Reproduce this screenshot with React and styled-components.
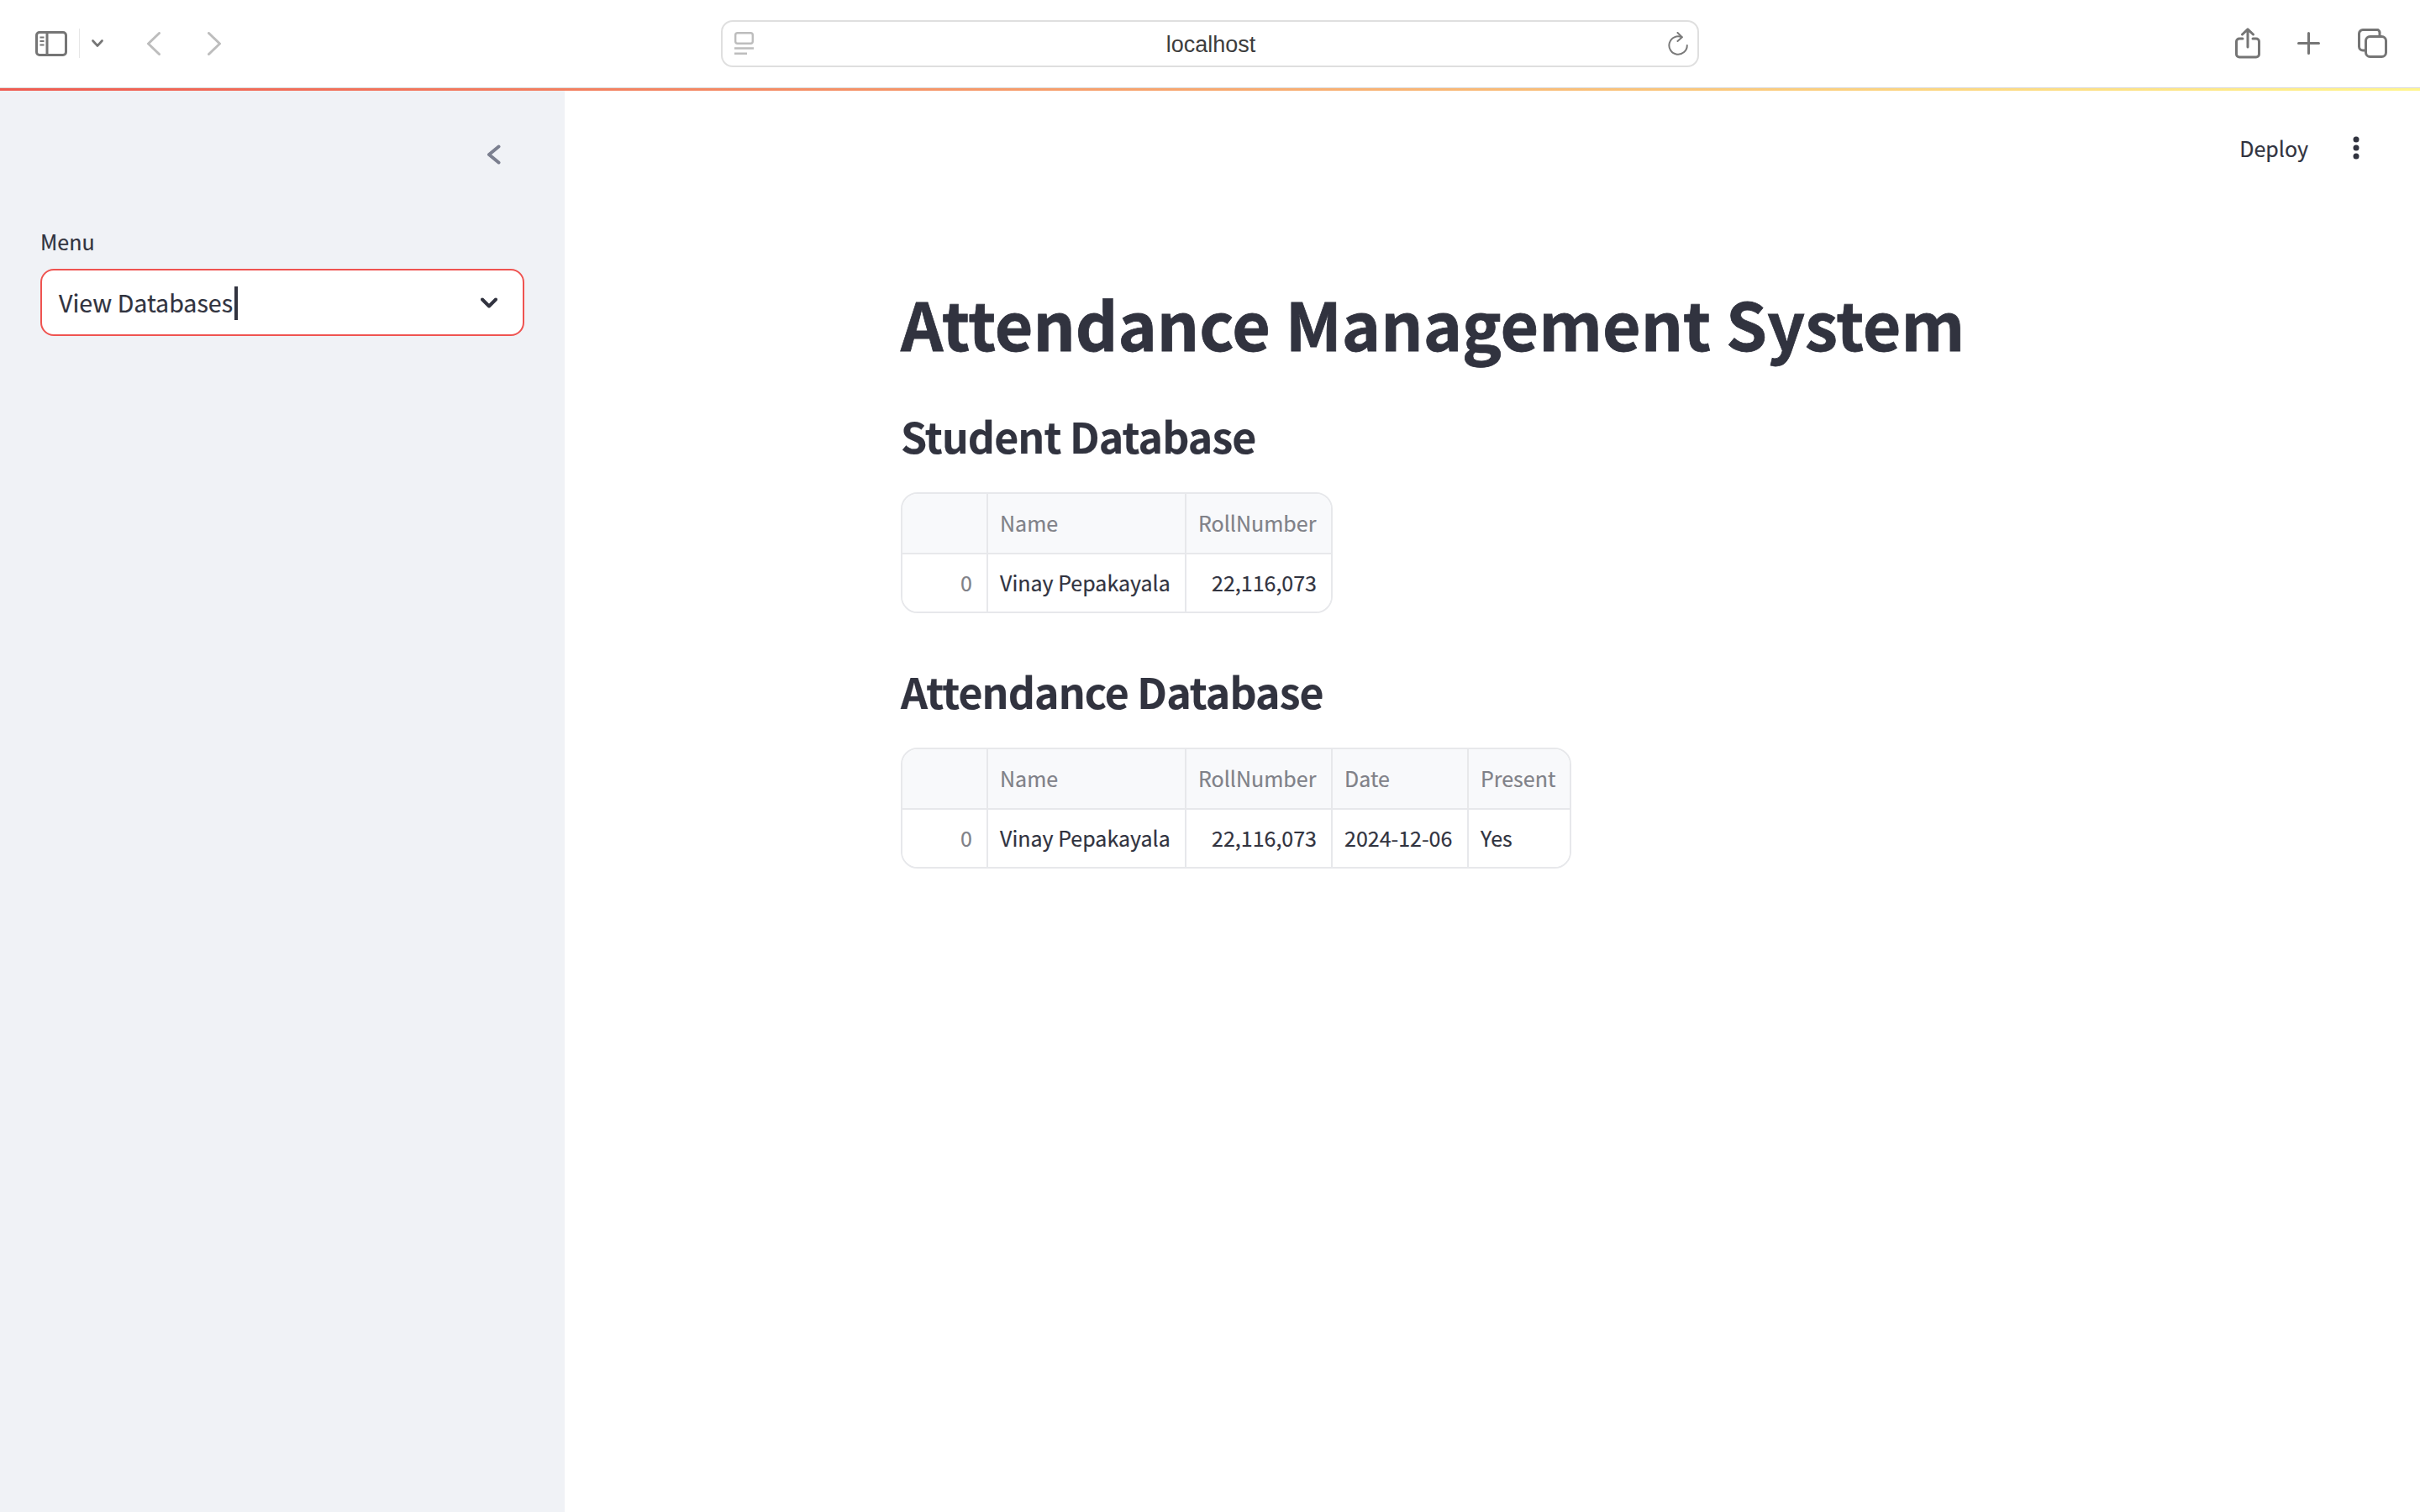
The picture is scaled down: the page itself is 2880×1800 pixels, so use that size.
import React from "react";
import styled, { createGlobalStyle } from "styled-components";

const SANS = `"Noto Sans CJK SC", "Noto Sans", sans-serif`;
const INK = "#31333f";
const MUTED = "#808188";
const RULE = "#e7e8eb";

const Global = createGlobalStyle`
  html, body { margin: 0; padding: 0; background: #fff; }
  body { font-family: ${SANS}; color: ${INK}; -webkit-text-stroke: 0.2px currentColor; }
  * { box-sizing: border-box; }
`;

const Page = styled.div`
  width: 2880px;
  height: 1800px;
  display: flex;
  flex-direction: column;
  overflow: hidden;
`;

const Toolbar = styled.header`
  height: 105px;
  flex: none;
  display: flex;
  align-items: center;
  padding-bottom: 1px;
  border-bottom: 1px solid #d9d9d9;
  background: #fff;
`;

const ToolLeft = styled.div`
  width: 858px;
  flex: none;
  display: flex;
  align-items: center;
  padding-left: 42px;
`;

const ToolRight = styled.div`
  flex: 1;
  display: flex;
  align-items: center;
  justify-content: flex-end;
  padding-right: 39px;
`;

const Divider = styled.span`
  width: 1px;
  height: 35px;
  background: #e6e6e6;
  margin: 0 14px;
`;

const ToolIcon = styled.svg`
  display: block;
  flex: none;
  margin-left: ${(p) => p.$left || 0}px;
`;

const AddressBar = styled.div`
  width: 1164px;
  height: 56px;
  flex: none;
  display: flex;
  align-items: center;
  justify-content: space-between;
  padding: 0 11px 0 14px;
  border: 2px solid #dfdfdf;
  border-radius: 14px;
`;

const Host = styled.span`
  font-family: "Liberation Sans", Arial, sans-serif;
  font-size: 27px;
  line-height: 32px;
  padding: 3px 0 0 0;
  color: #3d3d3d;
  -webkit-text-stroke: 0;
`;

const Progress = styled.div`
  height: 3px;
  flex: none;
  background: linear-gradient(90deg, #ef5a50, #fff58e);
`;

const Body = styled.div`
  flex: 1;
  display: flex;
  min-height: 0;
`;

const Sidebar = styled.aside`
  width: 672px;
  flex: none;
  background: #f0f2f6;
  padding: 64px 48px 0;
`;

const CollapseRow = styled.div`
  display: flex;
  justify-content: flex-end;
  padding-right: 28px;
`;

const FieldLabel = styled.label`
  display: block;
  margin-top: 70px;
  font-size: 25px;
  line-height: 43px;
  color: ${INK};
`;

const Select = styled.div`
  margin-top: 11px;
  height: 80px;
  display: flex;
  align-items: center;
  justify-content: space-between;
  padding: 0 30px 0 20px;
  background: #fff;
  border: 2px solid #ef5350;
  border-radius: 16px;
  font-size: 28.6px;
  color: ${INK};
`;

const SelectValue = styled.span`
  display: flex;
  align-items: center;
  line-height: 40px;
  margin-top: -1px;
`;

const Caret = styled.i`
  display: block;
  width: 4px;
  height: 40px;
  margin: 2px 0 0 2px;
  background: ${INK};
`;

const Main = styled.main`
  flex: 1;
  min-width: 0;
`;

const AppHeader = styled.div`
  height: 136px;
  display: flex;
  align-items: center;
  justify-content: flex-end;
  gap: 53px;
  padding: 0 72px 0 0;
`;

const DeployLabel = styled.span`
  font-size: 25px;
  line-height: 40px;
  margin-top: -1px;
  color: ${INK};
`;

const Content = styled.div`
  padding: 0 0 0 400px;
`;

const Title = styled.h1`
  margin: 87px 0 0;
  font-size: 78.6px;
  line-height: 106px;
  font-weight: 700;
  -webkit-text-stroke: 0.8px currentColor;
  color: ${INK};
`;

const Subhead = styled.h3`
  margin: ${(p) => p.$top}px 0 0;
  font-size: 50px;
  line-height: 72px;
  font-weight: 700;
  letter-spacing: -0.9px;
  color: ${INK};
`;

const Grid = styled.div`
  display: inline-grid;
  grid-template-columns: ${(p) => p.$columns};
  grid-template-rows: 72px 68px;
  margin-top: 32px;
  border: 2px solid ${RULE};
  border-radius: 20px;
  overflow: hidden;
  vertical-align: top;
  font-size: 25px;
`;

const Cell = styled.div`
  display: flex;
  align-items: center;
  justify-content: ${(p) => (p.$end ? "flex-end" : "flex-start")};
  padding: 0 ${(p) => (p.$end ? 17 : 14)}px 2px 14px;
  white-space: nowrap;
  color: ${(p) => (p.$muted ? MUTED : INK)};
  background: ${(p) => (p.$head ? "#f8f9fb" : "#fff")};
  border-right: ${(p) => (p.$last ? "none" : `2px solid ${RULE}`)};
  border-bottom: ${(p) => (p.$head ? `2px solid ${RULE}` : "none")};
`;

const Block = styled.div``;

function DataTable({ columns, head, row }) {
  return (
    <Block>
      <Grid $columns={columns}>
        <Cell $head />
        {head.map((h, i) => (
          <Cell key={h} $head $muted $last={i === head.length - 1}>{h}</Cell>
        ))}
        <Cell $end $muted>0</Cell>
        {row.map((c, i) => (
          <Cell key={c.text} $end={c.end} $last={i === row.length - 1}>{c.text}</Cell>
        ))}
      </Grid>
    </Block>
  );
}

const students = {
  columns: "102px 236px 172px",
  head: ["Name", "RollNumber"],
  row: [{ text: "Vinay Pepakayala" }, { text: "22,116,073", end: true }],
};

const attendance = {
  columns: "102px 236px 174px 162px 120px",
  head: ["Name", "RollNumber", "Date", "Present"],
  row: [
    { text: "Vinay Pepakayala" },
    { text: "22,116,073", end: true },
    { text: "2024-12-06" },
    { text: "Yes" },
  ],
};

export default function App() {
  return (
    <Page>
      <Global />
      <Toolbar>
        <ToolLeft>
          <ToolIcon width="38" height="30" viewBox="0 0 38 30" fill="none" stroke="#757575" strokeWidth="3">
            <rect x="1.5" y="1.5" width="35" height="27" rx="3.5" />
            <path d="M14 2v26" />
            <path d="M5.5 7.5h5M5.5 12h5M5.5 16.5h5" strokeWidth="2" />
          </ToolIcon>
          <Divider />
          <ToolIcon width="14" height="9" viewBox="0 0 14 9" fill="none" stroke="#757575" strokeWidth="2.6" strokeLinecap="round" strokeLinejoin="round">
            <path d="M1.5 1.5 7 7.5l5.5-6" />
          </ToolIcon>
          <ToolIcon $left={52} width="16" height="28" viewBox="0 0 16 28" fill="none" stroke="#bdbdbd" strokeWidth="3" strokeLinecap="round" strokeLinejoin="round">
            <path d="M14.5 1.5 1.5 14l13 12.500" />
          </ToolIcon>
          <ToolIcon $left={56} width="16" height="28" viewBox="0 0 16 28" fill="none" stroke="#bdbdbd" strokeWidth="3" strokeLinecap="round" strokeLinejoin="round">
            <path d="M1.500 1.500 14.500 14l-13 12.500" />
          </ToolIcon>
        </ToolLeft>
        <AddressBar>
          <ToolIcon width="23" height="27" viewBox="0 0 23 27" fill="none" stroke="#bdbdbd" strokeWidth="2.4">
            <rect x="1.200" y="1.200" width="20.600" height="12.600" rx="2.500" />
            <path d="M0 19.500h23M0 25.800h15" />
          </ToolIcon>
          <Host>localhost</Host>
          <ToolIcon width="24" height="28" viewBox="0 0 24 28" fill="none" stroke="#7a7a7a" strokeWidth="2" strokeLinecap="round" strokeLinejoin="round">
            <path d="M16.500 6.300A10.700 10.700 0 1 0 22.800 16" />
            <path d="M11.500 1 16.800 6.300 11.500 11" />
          </ToolIcon>
        </AddressBar>
        <ToolRight>
          <ToolIcon width="30" height="37" viewBox="0 0 30 37" fill="none" stroke="#757575" strokeWidth="3" strokeLinecap="round" strokeLinejoin="round">
            <path d="M9 13H5a3.500 3.500 0 0 0-3.500 3.500v15A3.500 3.500 0 0 0 5 35h20a3.500 3.500 0 0 0 3.500-3.500v-15A3.500 3.500 0 0 0 25 13h-4" />
            <path d="M15 23V2M8.500 8 15 1.800 21.500 8" />
          </ToolIcon>
          <ToolIcon $left={44} width="27" height="27" viewBox="0 0 27 27" fill="none" stroke="#757575" strokeWidth="3" strokeLinecap="round">
            <path d="M13.500 1.500v24M1.500 13.500h24" />
          </ToolIcon>
          <ToolIcon $left={45} width="35" height="35" viewBox="0 0 35 35" fill="none" stroke="#757575" strokeWidth="3" strokeLinejoin="round">
            <rect x="9.500" y="9.500" width="24" height="24" rx="5" />
            <path d="M9 26H6a4.500 4.500 0 0 1-4.500-4.500V6A4.500 4.500 0 0 1 6 1.500h18A4.500 4.500 0 0 1 26 6v3" />
          </ToolIcon>
        </ToolRight>
      </Toolbar>
      <Progress />
      <Body>
        <Sidebar>
          <CollapseRow>
            <ToolIcon width="17" height="24" viewBox="0 0 17 24" fill="none" stroke="#7b7f8f" strokeWidth="4" strokeLinecap="round" strokeLinejoin="round">
              <path d="M14.500 2.500 3 12l11.500 9.500" />
            </ToolIcon>
          </CollapseRow>
          <FieldLabel>Menu</FieldLabel>
          <Select>
            <SelectValue>View Databases<Caret /></SelectValue>
            <ToolIcon width="20" height="13" viewBox="0 0 20 13" fill="none" stroke={INK} strokeWidth="4" strokeLinecap="round" strokeLinejoin="round">
              <path d="M2 2.500 10 10.500l8-8" />
            </ToolIcon>
          </Select>
        </Sidebar>
        <Main>
          <AppHeader>
            <DeployLabel>Deploy</DeployLabel>
            <ToolIcon width="8" height="28" viewBox="0 0 8 28" fill={INK}>
              <circle cx="4" cy="4" r="3.500" />
              <circle cx="4" cy="14" r="3.500" />
              <circle cx="4" cy="24" r="3.500" />
            </ToolIcon>
          </AppHeader>
          <Content>
            <Title>Attendance Management System</Title>
            <Subhead $top={45}>Student Database</Subhead>
            <DataTable {...students} />
            <Subhead $top={56}>Attendance Database</Subhead>
            <DataTable {...attendance} />
          </Content>
        </Main>
      </Body>
    </Page>
  );
}
